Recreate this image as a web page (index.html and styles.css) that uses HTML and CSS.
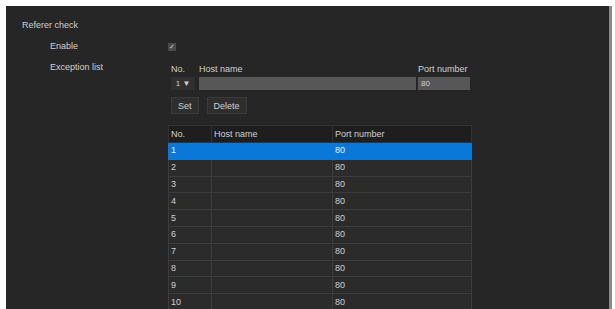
FILE: index.html
```html
<!DOCTYPE html>
<html lang="en">
<head>
    <meta charset="UTF-8">
    <title>Referer check</title>
    <link rel="stylesheet" href="styles.css">
</head>
<body>
    <div class="panel">
        <div class="title">Referer check</div>

        <div class="field">
            <div class="label">Enable</div>
            <div class="control">
                <span class="check">&#10003;</span>
            </div>
        </div>

        <div class="field">
            <div class="label">Exception list</div>
            <div class="control">
                <div class="edit-row">
                    <div class="col-no">
                        <div class="cap">No.</div>
                        <div class="select">1 &#9660;</div>
                    </div>
                    <div class="col-host">
                        <div class="cap">Host name</div>
                        <div class="input"></div>
                    </div>
                    <div class="col-port">
                        <div class="cap">Port number</div>
                        <div class="input">80</div>
                    </div>
                </div>
                <div class="buttons">
                    <button>Set</button>
                    <button>Delete</button>
                </div>

                <table class="list">
                    <tr><th class="c-no">No.</th><th class="c-host">Host name</th><th>Port number</th></tr>
                    <tr class="selected"><td>1</td><td></td><td>80</td></tr>
                    <tr><td>2</td><td></td><td>80</td></tr>
                    <tr><td>3</td><td></td><td>80</td></tr>
                    <tr><td>4</td><td></td><td>80</td></tr>
                    <tr><td>5</td><td></td><td>80</td></tr>
                    <tr><td>6</td><td></td><td>80</td></tr>
                    <tr><td>7</td><td></td><td>80</td></tr>
                    <tr><td>8</td><td></td><td>80</td></tr>
                    <tr><td>9</td><td></td><td>80</td></tr>
                    <tr><td>10</td><td></td><td>80</td></tr>
                </table>
            </div>
        </div>
    </div>
</body>
</html>
```

FILE: styles.css
```css
body {
    margin: 0;
    padding: 6px 3px 0 6px;
    background-color: #fff;
    font-family: "Liberation Sans", Arial, sans-serif;
    font-size: 9px;
    color: #d0d0d0;
    height: 309px;
    box-sizing: border-box;
    overflow: hidden;
}

.panel {
    background-color: #262626;
    border-right: 3px solid #8a8a8a;
    height: 310px;
    padding: 14px 0 0 16px;
    box-sizing: border-box;
}

.title {
    height: 11px;
    line-height: 11px;
}

.field {
    display: flex;
    margin-top: 10px;
}
.label {
    width: 118px;
    padding-left: 28px;
    line-height: 11px;
}
.control {
    line-height: 11px;
}

.check {
    display: inline-block;
    width: 8px;
    height: 8px;
    background-color: #4a4a4a;
    color: #ccc;
    font-size: 7px;
    line-height: 8px;
    text-align: center;
}

.edit-row {
    display: flex;
    margin-top: 3px;
    margin-left: 3px;
}
.cap {
    height: 9px;
    line-height: 9px;
    margin-bottom: 3px;
}
.col-no {
    width: 28px;
}
.col-host {
    width: 219px;
}
.col-port {
    width: 52px;
}
.select {
    width: 24px;
    height: 13px;
    line-height: 13px;
    background-color: #303030;
    text-align: center;
    font-size: 8px;
}
.input {
    height: 13px;
    line-height: 13px;
    background-color: #575757;
    padding-left: 3px;
    font-size: 8px;
}
.col-host .input {
    margin-right: 2px;
}

.buttons {
    display: flex;
    gap: 8px;
    margin: 7px 0 0 3px;
}
button {
    font-family: inherit;
    font-size: 9px;
    color: #d0d0d0;
    background-color: #2e2e2e;
    border: 1px solid #3a3a3a;
    height: 17px;
    padding: 0 6px;
}

.list {
    margin-top: 11px;
    border-collapse: collapse;
    width: 304px;
    font-size: 9px;
}
.list th {
    background-color: #1e1e1e;
    font-weight: normal;
    text-align: left;
    height: 16px;
    padding: 0 2px;
    border: 1px solid #333;
}
.list td {
    background-color: #2b2b2b;
    height: 15.8px;
    padding: 0 2px;
    border: 1px solid #3c3c3c;
}
.c-no {
    width: 38px;
}
.c-host {
    width: 116px;
}
.list tr.selected td {
    background-color: #0a78d8;
    border-color: #0a78d8;
    color: #e8f2ff;
}
```
